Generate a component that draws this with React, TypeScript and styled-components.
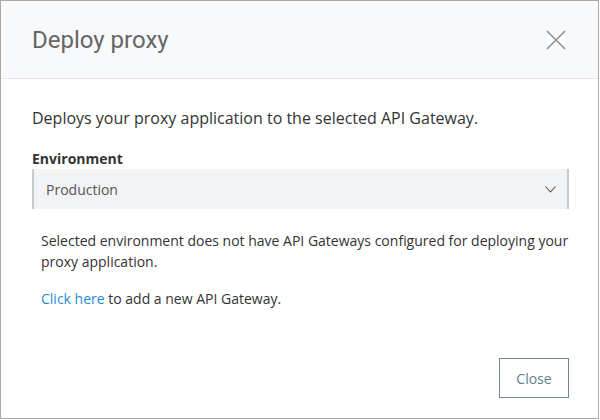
import React from "react";
import styled, { createGlobalStyle } from "styled-components";

const Global = createGlobalStyle`
  html, body { margin: 0; padding: 0; background: #ffffff; }
  body { font-family: "Open Sans", "Liberation Sans", sans-serif; }
  * { box-sizing: border-box; }
`;

const Dialog = styled.div`
  width: 599px;
  height: 419px;
  border: 1px solid #a9a9a9;
  background: #ffffff;
  display: flex;
  flex-direction: column;
`;

const Header = styled.div`
  height: 78px;
  flex: none;
  background: #f8f9fb;
  border-bottom: 1px solid #e2e4e8;
  display: flex;
  align-items: center;
  justify-content: space-between;
  padding: 0 32px 0 31px;
`;

const Title = styled.h1`
  margin: 0;
  font-family: Roboto, "Noto Sans", sans-serif;
  font-weight: 400;
  font-size: 24px;
  color: #666666;
`;

const CloseIcon = styled.button`
  border: none;
  background: transparent;
  padding: 0;
  width: 20px;
  height: 20px;
  display: flex;
  align-items: center;
  justify-content: center;
  cursor: pointer;
`;

const Body = styled.div`
  flex: 1;
  padding: 29px 29px 0 31px;
  display: flex;
  flex-direction: column;
`;

const Intro = styled.p`
  margin: 0;
  font-size: 16px;
  line-height: 21px;
  color: #333333;
`;

const Label = styled.label`
  margin-top: 19px;
  font-size: 14px;
  font-weight: 700;
  line-height: 21px;
  color: #333333;
`;

const Select = styled.div`
  height: 40px;
  background: #f2f3f5;
  border-left: 2px solid #c9cacc;
  border-right: 2px solid #c9cacc;
  display: flex;
  align-items: center;
  justify-content: space-between;
  padding: 0 11px 0 12px;
  font-size: 14px;
  color: #555555;
`;

const Message = styled.div`
  padding: 21px 0 0 9px;
  font-size: 14px;
  line-height: 21px;
  color: #333333;
`;

const Para = styled.p<{ $gap?: number }>`
  margin: ${(p) => p.$gap ?? 0}px 0 0 0;
`;

const Link = styled.a`
  color: #1f8dd6;
  text-decoration: none;
`;

const Footer = styled.div`
  display: flex;
  justify-content: flex-end;
  padding: 0 29px 20px 0;
`;

const Button = styled.button`
  width: 70px;
  height: 40px;
  border: 1px solid #6a8a99;
  background: #ffffff;
  color: #5f7f8f;
  font-family: "Open Sans", sans-serif;
  font-size: 14px;
  padding: 0;
  cursor: pointer;
`;

export default function App() {
  return (
    <>
      <Global />
      <Dialog>
        <Header>
          <Title>Deploy proxy</Title>
          <CloseIcon aria-label="Close">
            <svg width="20" height="20" viewBox="0 0 20 20">
              <path d="M1 1 L19 19 M19 1 L1 19" stroke="#8a8a8a" strokeWidth="1.4" fill="none" />
            </svg>
          </CloseIcon>
        </Header>
        <Body>
          <Intro>Deploys your proxy application to the selected API Gateway.</Intro>
          <Label>Environment</Label>
          <Select>
            <span>Production</span>
            <svg width="11" height="7" viewBox="0 0 11 7">
              <path d="M0.5 0.5 L5.5 6 L10.5 0.5" stroke="#555" strokeWidth="1.1" fill="none" />
            </svg>
          </Select>
          <Message>
            <Para>
              Selected environment does not have API Gateways configured for deploying your proxy application.
            </Para>
            <Para $gap={16}>
              <Link href="#">Click here</Link> to add a new API Gateway.
            </Para>
          </Message>
        </Body>
        <Footer>
          <Button>Close</Button>
        </Footer>
      </Dialog>
    </>
  );
}
